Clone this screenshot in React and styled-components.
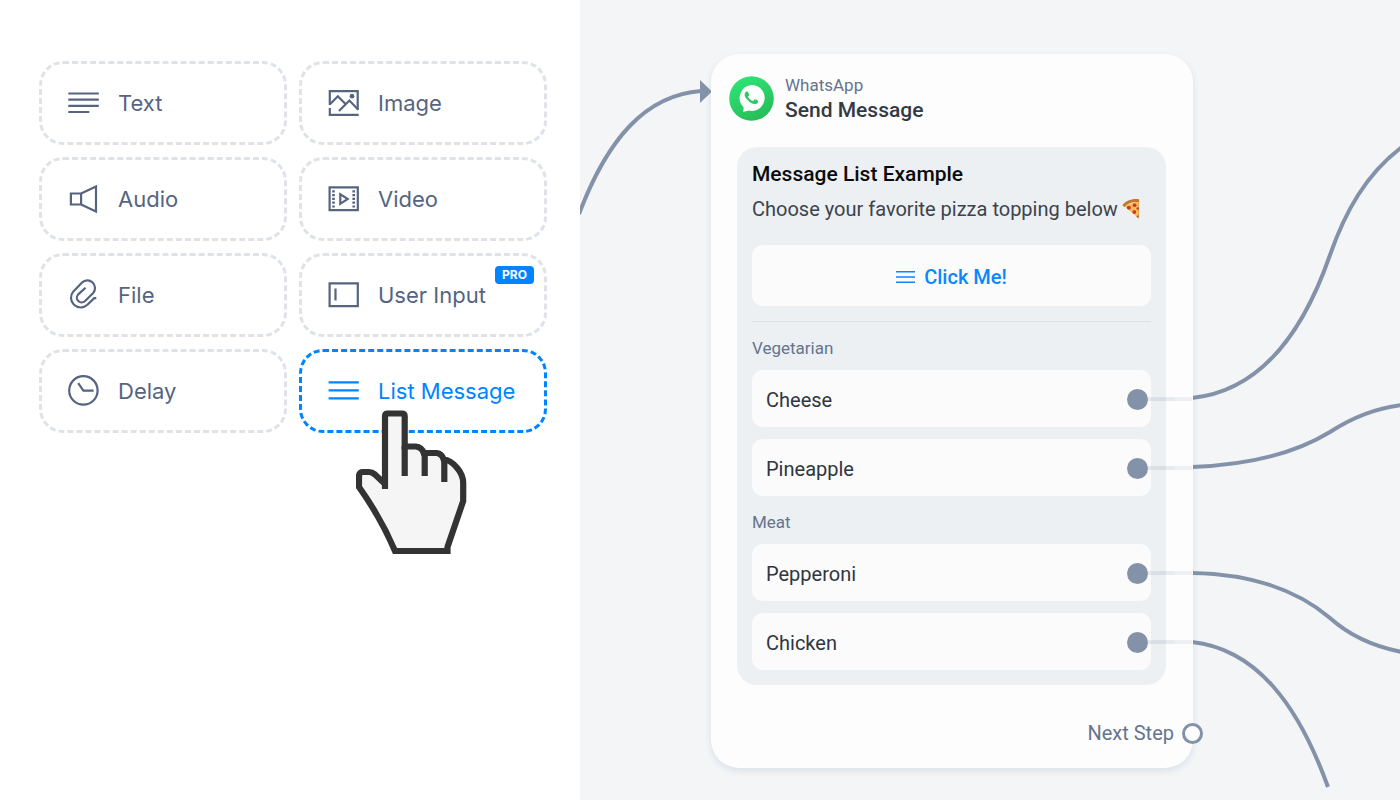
import React from "react";
import styled, { createGlobalStyle, css } from "styled-components";

const GlobalStyle = createGlobalStyle`
	* {
		box-sizing: border-box;
	}
	body {
		margin: 0;
		background: #ffffff;
		font-family: Inter, "Liberation Sans", sans-serif;
	}
	button {
		font-family: inherit;
		cursor: pointer;
	}
`;

const Page = styled.main`
	display: flex;
	min-height: 100vh;
`;

const Sidebar = styled.aside`
	flex: 0 0 580px;
	padding: 61px 33px 61px 39px;
	background: #ffffff;
`;

const BlockGrid = styled.div`
	display: grid;
	grid-template-columns: 1fr 1fr;
	gap: 12px;
`;

const BlockButton = styled.button`
	position: relative;
	display: flex;
	align-items: center;
	gap: 18px;
	height: 84px;
	padding: 0 0 0 26px;
	border: 3px dashed #dfe3e9;
	border-radius: 24px;
	background: transparent;
	color: #56647f;
	font-size: 22px;
	line-height: 28px;
	white-space: nowrap;

	${props => props.$active && css`
		border-color: #0084ff;
		color: #0084ff;
	`}
`;

const Icon = styled.svg`
	flex: none;
	width: 32px;
	height: 32px;
	fill: none;
	stroke: currentColor;
	stroke-width: 2.2;
`;

const ProBadge = styled.span`
	position: absolute;
	top: 10px;
	right: 10px;
	width: 39px;
	border-radius: 4px;
	background: #0084ff;
	color: #ffffff;
	font-size: 12px;
	font-weight: 700;
	line-height: 18px;
	text-align: center;
`;

const Pointer = styled.svg`
	position: absolute;
	top: 58px;
	left: 54px;
	z-index: 1;
	width: 112px;
	height: 144px;
	pointer-events: none;
`;

const Canvas = styled.section`
	position: relative;
	flex: 1;
	min-width: 0;
	overflow: hidden;
	background: #f3f5f7;
`;

const Wires = styled.svg`
	position: absolute;
	top: 0;
	left: 0;
	width: 820px;
	height: 800px;
	fill: none;
	stroke: #8492a9;
	stroke-width: 4;
`;

const Node = styled.article`
	position: absolute;
	top: 54px;
	left: 131px;
	width: 482px;
	padding: 22px 27px 21px 26px;
	border-radius: 28px;
	background: #fdfdfd;
	box-shadow: 0 3px 6px rgba(120, 150, 180, 0.2);
	font-family: Roboto, "Liberation Sans", sans-serif;
`;

const NodeHeader = styled.header`
	display: flex;
	align-items: center;
	gap: 11px;
	height: 45px;
	margin: 0 0 26px -8px;
`;

const Logo = styled.svg`
	flex: none;
	width: 45px;
	height: 45px;
`;

const Channel = styled.div`
	color: #65748d;
	font-size: 17px;
	line-height: 22px;
`;

const NodeTitle = styled.h2`
	margin: 0;
	color: #323a44;
	font-size: 21px;
	font-weight: 500;
	line-height: 28px;
`;

const Message = styled.div`
	padding: 15px;
	border-radius: 20px;
	background: #ecf0f3;
`;

const MessageTitle = styled.h3`
	margin: 0;
	color: #0a0b0d;
	font-size: 21px;
	font-weight: 500;
	line-height: 24px;
`;

const MessageText = styled.p`
	display: flex;
	align-items: center;
	gap: 4px;
	margin: 8px 0 21px;
	color: #3c434d;
	font-size: 20px;
	line-height: 30px;
	white-space: nowrap;
`;

const Pizza = styled.svg`
	flex: none;
	width: 18px;
	height: 22px;
`;

const ListButton = styled.button`
	display: flex;
	align-items: center;
	justify-content: center;
	gap: 9px;
	width: 100%;
	height: 61px;
	padding: 2px 0 0;
	border: 0;
	border-radius: 11px;
	background: #fbfbfc;
	color: #0a86ff;
	font-size: 20px;
	font-weight: 500;
`;

const ListIcon = styled.svg`
	width: 19px;
	height: 14px;
	stroke: currentColor;
	stroke-width: 1.5;
`;

const Sections = styled.div`
	display: flex;
	flex-direction: column;
	gap: 16px;
	margin-top: 15px;
	padding-top: 16px;
	border-top: 1px solid #dde2e7;
`;

const Section = styled.section`
	display: flex;
	flex-direction: column;
	gap: 12px;
`;

const SectionTitle = styled.h4`
	margin: 0;
	color: #65748d;
	font-size: 17px;
	font-weight: 400;
	line-height: 20px;
`;

const Option = styled.div`
	position: relative;
	display: flex;
	align-items: center;
	justify-content: space-between;
	height: 57px;
	padding: 2px 3px 0 14px;
	border-radius: 11px;
	background: #fbfbfc;
	color: #2f363f;
	font-size: 20px;
`;

const Port = styled.span`
	position: relative;
	z-index: 1;
	width: 21px;
	height: 21px;
	border-radius: 50%;
	background: #8492a9;
`;

const Lead = styled.span`
	position: absolute;
	top: 27px;
	right: -41px;
	width: 45px;
	height: 4px;
	background: linear-gradient(90deg, rgba(132, 146, 169, 0.18) 60%, rgba(132, 146, 169, 0.12) 62%);
`;

const NodeFooter = styled.footer`
	display: flex;
	align-items: center;
	justify-content: flex-end;
	gap: 8px;
	margin: 34px -37px 0 0;
	color: #65748d;
	font-size: 20px;
	line-height: 28px;
`;

const NextPort = styled.span`
	width: 21px;
	height: 21px;
	border: 3px solid #8492a9;
	border-radius: 50%;
	background: #fdfdfd;
`;

const TextIcon = () => (
	<Icon viewBox="0 0 32 32">
		<path d="M0.3 6.5h30.5M0.3 12.7h30.5M0.3 18.8h30.5M0.3 25h21" />
	</Icon>
);

const ImageIcon = () => (
	<Icon viewBox="0 0 32 32">
		<path d="M1.8 18V4.2h27.9v18.6" />
		<path d="M2 17.2l7.8-7.9 8 8" />
		<path d="M11 24l10.4-10.5 8.9 9.2" />
		<path d="M1.8 21v6.8h28.9" />
		<circle cx="24" cy="9.2" r="2.4" fill="currentColor" stroke="none" />
	</Icon>
);

const AudioIcon = () => (
	<Icon viewBox="0 0 32 32">
		<path d="M2.9 10.5h10.2v11H2.9zM13.1 10.5L28 3.5v25l-14.9-7" />
	</Icon>
);

const VideoIcon = () => (
	<Icon viewBox="0 0 32 32">
		<path d="M1.6 4.4h28.2v22.8H1.6z" />
		<path d="M12.3 11.2v9.6l7.4-4.8z" />
		<path d="M5.5 7.2v18M25.7 7.2v18" strokeWidth="2.6" strokeDasharray="2.2 1.6" />
	</Icon>
);

const FileIcon = () => (
	<Icon viewBox="0 0 32 32">
		<path d="M28.3 19.2h-2.1l-6.8 6.6A9.7 9.7 0 0 1 5.4 12.4L14 3.6A7.65 7.65 0 0 1 25.2 14L16.8 22.2A4.75 4.75 0 0 1 10 15.6L17.5 8.8" />
	</Icon>
);

const InputIcon = () => (
	<Icon viewBox="0 0 32 32">
		<path d="M1.6 4.4h28.2v22.8H1.6zM7.5 9.5v12" />
	</Icon>
);

const DelayIcon = () => (
	<Icon viewBox="0 0 32 32">
		<circle cx="15.4" cy="15.4" r="14.2" />
		<path d="M10.2 8.2l5.2 7.4h10.2" />
	</Icon>
);

const ListMessageIcon = () => (
	<Icon viewBox="0 0 32 32">
		<path d="M0.6 7.4h30.2M0.6 15.4h30.2M0.6 23.4h30.2" />
	</Icon>
);

const HandPointer = () => (
	<Pointer viewBox="0 0 112 144" fill="#f5f5f5" stroke="#333333" strokeWidth="6.2">
		<path d="M29 79V6q0-2.5 2.5-2.5h14.5q2.7 0 2.7 2.7V36.5h11q6 .5 8 6.500h13q5 .5 7 6.500 7 .5 13.500 8.500 6 7 6 15V91L91.500 137v4H39Q25 108 3 77V65.500Q3.500 62 7 62h6q3 0 6 2.500L28 73" />
		<path d="M48.7 66V36M68.7 66V43M88.3 72V49" />
	</Pointer>
);

const WhatsAppLogo = () => (
	<Logo viewBox="0 0 45 45">
		<defs>
			<linearGradient id="wa" x1="0" y1="0" x2="0.5" y2="1">
				<stop offset="0" stopColor="#2fe877" />
				<stop offset="1" stopColor="#27bf5b" />
			</linearGradient>
		</defs>
		<circle cx="22.5" cy="22.5" r="22.3" fill="url(#wa)" />
		<path fill="#ffffff" d="M22.2 9a13 13 0 1 1-2.7 25.6c-1.6.6-3.5 1.300-5.500 1.200.6-1.600.8-3.300.4-4.800A13 13 0 0 1 22.200 9z" />
		<path
			fill="#2acb62"
			transform="translate(8.9 8.3) scale(1.12)"
			d="M17.472 14.382c-.297-.149-1.758-.867-2.03-.967-.273-.099-.471-.148-.67.15-.197.297-.767.966-.94 1.164-.173.199-.347.223-.644.075-.297-.15-1.255-.463-2.39-1.475-.883-.788-1.48-1.761-1.653-2.059-.173-.297-.018-.458.13-.606.134-.133.298-.347.446-.52.149-.174.198-.298.298-.497.099-.198.05-.371-.025-.52-.075-.149-.669-1.612-.916-2.207-.242-.579-.487-.5-.669-.51-.173-.008-.371-.01-.57-.01-.198 0-.52.074-.792.372-.272.297-1.04 1.016-1.04 2.479 0 1.462 1.065 2.875 1.213 3.074.149.198 2.096 3.2 5.077 4.487.709.306 1.262.489 1.694.625.712.227 1.36.195 1.871.118.571-.085 1.758-.719 2.006-1.413.248-.694.248-1.289.173-1.413-.074-.124-.272-.198-.57-.347"
		/>
	</Logo>
);

const PizzaSlice = () => (
	<Pizza viewBox="0 0 18 22" role="img" aria-label="pizza">
		<path fill="#f6bd5e" d="M1.5 7.5L16.3 3.5 16.8 20.5z" />
		<path fill="#c4762c" d="M.4 7.3C4 2.6 9.8.4 17 1.2l.3 3C11 3.6 5.8 5 2.3 9z" />
		<path fill="none" stroke="#e2a04a" d="M16.6 4.5v16" />
		<circle cx="12.6" cy="7.2" r="1.9" fill="#cf3a22" />
		<circle cx="6.9" cy="9.8" r="2" fill="#cf3a22" />
		<circle cx="12.3" cy="14" r="1.9" fill="#cf3a22" />
		<circle cx="15.7" cy="10.5" r="1.3" fill="#cf3a22" />
		<circle cx="15.6" cy="18.5" r="1" fill="#cf3a22" />
	</Pizza>
);

const blocks = [
	{ label: "Text", icon: TextIcon },
	{ label: "Image", icon: ImageIcon },
	{ label: "Audio", icon: AudioIcon },
	{ label: "Video", icon: VideoIcon },
	{ label: "File", icon: FileIcon },
	{ label: "User Input", icon: InputIcon, pro: true },
	{ label: "Delay", icon: DelayIcon },
	{ label: "List Message", icon: ListMessageIcon, active: true },
];

const sections = [
	{ title: "Vegetarian", options: ["Cheese", "Pineapple"] },
	{ title: "Meat", options: ["Pepperoni", "Chicken"] },
];

const App = () => {
	return (
		<>
			<GlobalStyle />
			<Page>
				<Sidebar>
					<BlockGrid>
						{blocks.map(({ label, icon: BlockIcon, pro, active }) => (
							<BlockButton key={label} type="button" $active={active}>
								<BlockIcon />
								{label}
								{pro && <ProBadge>PRO</ProBadge>}
								{active && <HandPointer />}
							</BlockButton>
						))}
					</BlockGrid>
				</Sidebar>
				<Canvas>
					<Wires viewBox="0 0 820 800">
						<path d="M-1 214C27 140 65 95 121 91" />
						<path d="M120 80l12 11.5-12 11.5z" fill="#8492a9" stroke="none" />
						<path d="M612 398C682 391 724 330 750 255C765 212 786 174 822 147" />
						<path d="M612 467C666 465 714 454 750 432C770 419 796 408 822 405" />
						<path d="M612 573C670 574 716 589 750 618C770 636 796 647 822 652" />
						<path d="M612 642C676 649 718 704 748 787" />
					</Wires>
					<Node>
						<NodeHeader>
							<WhatsAppLogo />
							<div>
								<Channel>WhatsApp</Channel>
								<NodeTitle>Send Message</NodeTitle>
							</div>
						</NodeHeader>
						<Message>
							<MessageTitle>Message List Example</MessageTitle>
							<MessageText>
								Choose your favorite pizza topping below
								<PizzaSlice />
							</MessageText>
							<ListButton type="button">
								<ListIcon viewBox="0 0 19 14">
									<path d="M0 1.8h19M0 7h19M0 12.2h19" />
								</ListIcon>
								Click Me!
							</ListButton>
							<Sections>
								{sections.map(section => (
									<Section key={section.title}>
										<SectionTitle>{section.title}</SectionTitle>
										{section.options.map(option => (
											<Option key={option}>
												{option}
												<Lead />
												<Port />
											</Option>
										))}
									</Section>
								))}
							</Sections>
						</Message>
						<NodeFooter>
							Next Step
							<NextPort />
						</NodeFooter>
					</Node>
				</Canvas>
			</Page>
		</>
	);
};

export default App;
